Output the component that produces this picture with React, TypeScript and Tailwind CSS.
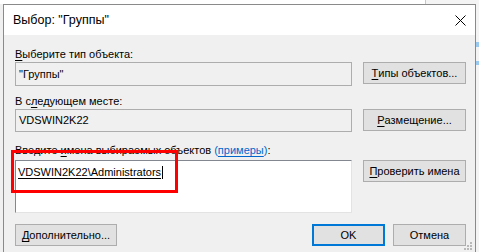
import React from "react";

const font = { fontFamily: '"Liberation Sans", Arial, sans-serif' };

function Btn({ children, w, primary }: { children: React.ReactNode; w: string; primary?: boolean }) {
  return (
    <div
      className={`${w} h-[22px] flex items-center justify-center bg-[#e1e1e1] text-[11px] text-black ${
        primary ? "border-2 border-[#0078d7]" : "border border-[#adadad]"
      }`}
    >
      {children}
    </div>
  );
}

function U({ children }: { children: React.ReactNode }) {
  return <span className="underline underline-offset-2">{children}</span>;
}

export default function App() {
  return (
    <div className="w-[479px] h-[252px] overflow-hidden bg-white relative" style={font}>
      {/* background above the dialog */}
      <div className="h-[4px] flex">
        <div className="w-[425px]" />
        <div className="w-px bg-[#c8c8c8]" />
        <div className="flex-1 bg-[#f4f4f4]" />
      </div>

      <div className="flex h-[248px]">
        <div className="w-[3px] bg-[#f0f0f0]" />

        {/* dialog window */}
        <div className="w-[473px] border border-[#8a8a8a] border-b-0 bg-[#f0f0f0] flex flex-col">
          <div className="h-[30px] bg-white flex items-center justify-between pl-[9px] pr-[8px]">
            <span className="text-[12.5px] text-black">Выбор: "Группы"</span>
            <svg width="11" height="11" viewBox="0 0 11 11" className="mr-[1px]">
              <path d="M0.5 0.5 L10.5 10.5 M10.5 0.5 L0.5 10.5" stroke="#000" strokeWidth="1" />
            </svg>
          </div>

          <div className="flex-1 pl-[11px] pr-[9px] text-[11px] text-black relative">
            <div className="mt-[12px] h-[15px] leading-[15px]">
              <U>В</U>ыберите тип объекта:
            </div>
            <div className="flex justify-between">
              <div className="w-[337px] h-[24px] border border-[#adadad] bg-[#f0f0f0] flex items-center pl-[3px]">
                "Группы"
              </div>
              <Btn w="w-[103px]">
                <U>Т</U>ипы объектов...
              </Btn>
            </div>

            <div className="mt-[8px] h-[15px] leading-[15px]">
              В с<U>л</U>едующем месте:
            </div>
            <div className="flex justify-between">
              <div className="w-[337px] h-[23px] border border-[#adadad] bg-[#f0f0f0] flex items-center pl-[3px]">
                VDSWIN2K22
              </div>
              <Btn w="w-[103px]">
                <U>Р</U>азмещение...
              </Btn>
            </div>

            <div className="mt-[11px] h-[15px] leading-[15px]">
              Введите <U>и</U>мена выбираемых объектов{" "}
              <span className="text-[#0066cc]">
                (<span className="underline underline-offset-2">примеры</span>)
              </span>
              :
            </div>
            <div className="flex justify-between mt-[2px]">
              <div className="w-[337px] h-[53px] border border-[#828790] border-r-[#e3e3e3] border-b-[#e3e3e3] bg-white pl-[2px] pt-[3px]">
                <span className="inline-flex items-center">
                  <span className="underline underline-offset-2">VDSWIN2K22\Administrators</span>
                  <span className="w-px h-[13px] bg-black ml-[1px]" />
                </span>
              </div>
              <Btn w="w-[103px]">
                <U>П</U>роверить имена
              </Btn>
            </div>

            <div className="flex mt-[11px] items-center">
              <Btn w="w-[102px]">
                <U>Д</U>ополнительно...
              </Btn>
              <div className="flex-1" />
              <Btn w="w-[73px]" primary>
                OK
              </Btn>
              <div className="w-[8px]" />
              <Btn w="w-[73px]">Отмена</Btn>
            </div>

            {/* size grip */}
            <div className="absolute right-[3px] bottom-[2px] grid grid-cols-3 gap-[1px]">
              {[0, 0, 1, 0, 1, 1, 1, 1, 1].map((v, i) => (
                <div key={i} className={`w-[2px] h-[2px] ${v ? "bg-[#b8b8b8]" : ""}`} />
              ))}
            </div>
          </div>
        </div>

        <div className="flex-1 bg-[#f4f4f4] flex flex-col">
          <div className="h-[38px]" />
          <div className="h-[5px] bg-[#99c9ef]" />
          <div className="h-[14px]" />
          <div className="h-[4px] bg-[#99c9ef]" />
        </div>
      </div>

      {/* red highlight */}
      <div className="absolute left-[11px] top-[150px] w-[167px] h-[43px] border-[3px] border-[#ff0000]" />
    </div>
  );
}
